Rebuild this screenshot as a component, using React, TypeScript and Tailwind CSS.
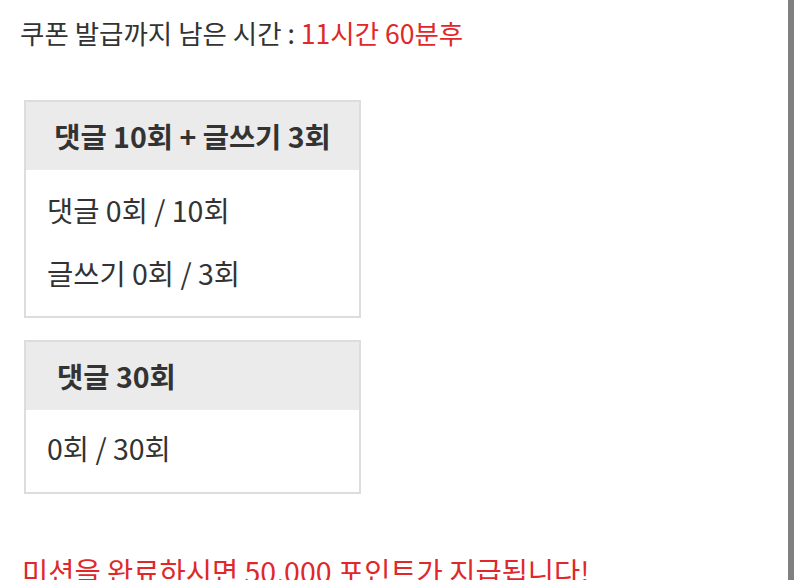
import React from "react";

const font = { fontFamily: "'Noto Sans CJK KR', 'Noto Sans', sans-serif" };

export default function App() {
  return (
    <div className="flex min-h-[580px] bg-white text-[#333333]" style={font}>
      <div className="flex-1 pl-[20px] pt-[16px]">
        {/* 남은 시간 */}
        <p className="text-[26.5px] leading-[34px]">
          쿠폰 발급까지 남은 시간 : <span className="text-[#e0282a]">11시간 60분후</span>
        </p>

        {/* 미션 1 */}
        <div className="mt-[50px] ml-[4px] w-[337px] border-2 border-[#dddddd]">
          <div className="h-[68px] flex items-center justify-center bg-[#ebebeb] text-[28.5px] font-bold">
            댓글 10회 + 글쓰기 3회
          </div>
          <div className="pl-[21px] pt-[8px] pb-[12px] text-[28.5px]">
            <div className="h-[63px] leading-[63px]">댓글 0회 / 10회</div>
            <div className="h-[63px] leading-[63px]">글쓰기 0회 / 3회</div>
          </div>
        </div>

        {/* 미션 2 */}
        <div className="mt-[22px] ml-[4px] w-[337px] border-2 border-[#dddddd]">
          <div className="h-[68px] flex items-center pl-[31px] bg-[#ebebeb] text-[28.5px] font-bold">
            댓글 30회
          </div>
          <div className="pl-[21px] pt-[6px] pb-[13px] text-[28.5px]">
            <div className="h-[63px] leading-[63px]">0회 / 30회</div>
          </div>
        </div>

        <p className="mt-[60px] pl-[2px] text-[28.5px] leading-[34px] text-[#e0282a]">
          미션을 완료하시면 50,000 포인트가 지급됩니다!
        </p>
      </div>
      {/* scrollbar */}
      <div className="w-[6px] bg-[#808080]" />
      <div className="w-[6px]" />
    </div>
  );
}
